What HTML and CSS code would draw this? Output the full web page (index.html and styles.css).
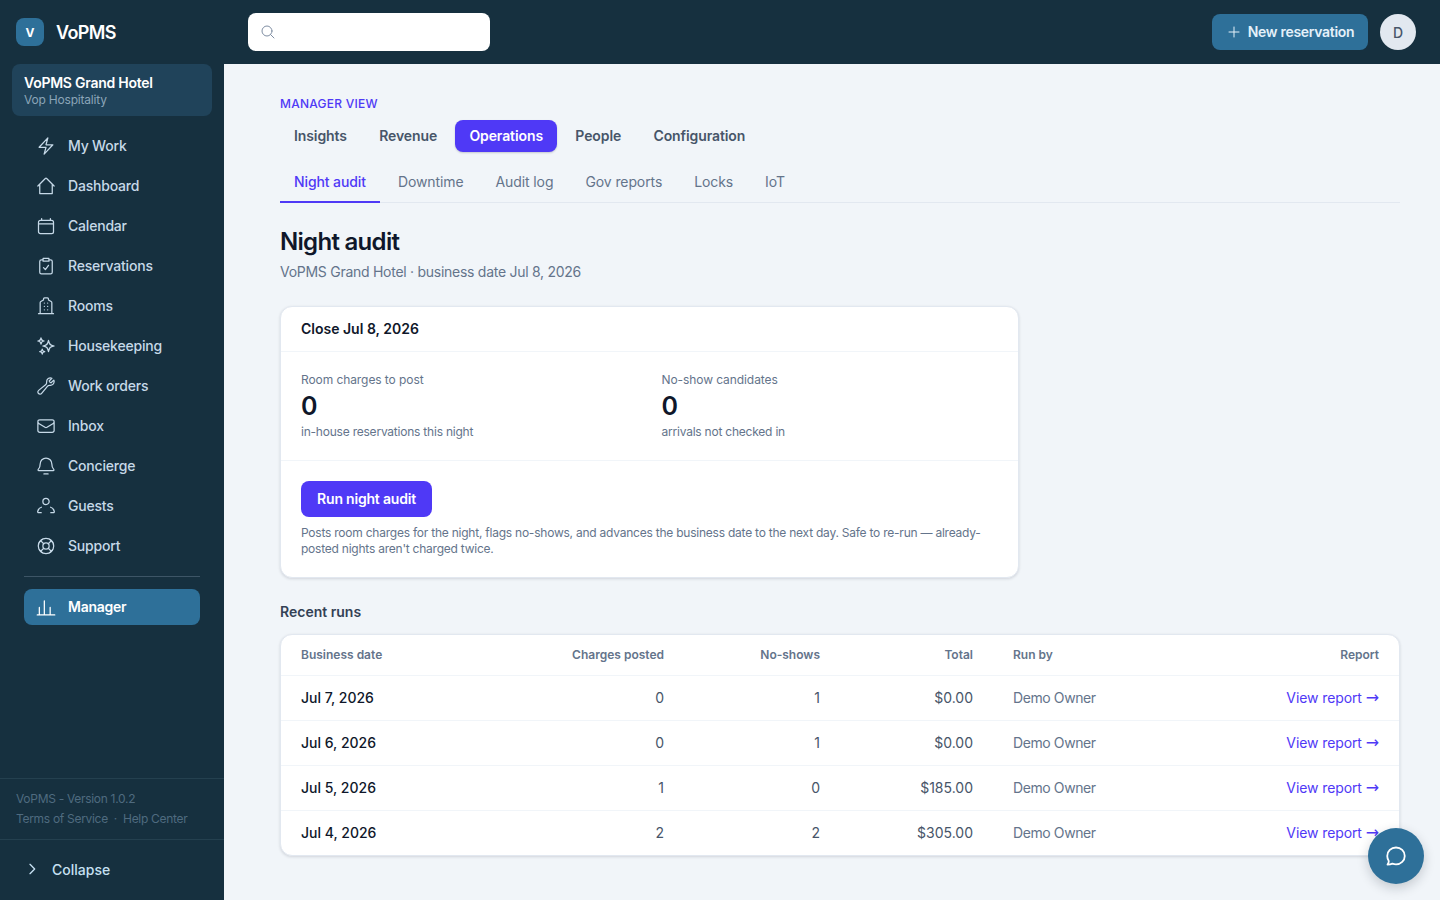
FILE: index.html
```html
<!DOCTYPE html>
<html lang="en">
  <head>
    <meta charset="UTF-8" />
    <meta name="viewport" content="width=device-width, initial-scale=1.0" />
    <title>VoPMS - Night audit</title>
    <link rel="stylesheet" href="styles.css">
  </head>
  <body>
    <div class="app">
      <aside class="sidebar">
        <div class="brand">
          <div class="brandLogo">V</div>
          <div class="brandName">VoPMS</div>
        </div>
        <div class="hotel">
          <div class="hotelName">VoPMS Grand Hotel</div>
          <div class="hotelOrg">Vop Hospitality</div>
        </div>
        <nav class="nav">
          <a class="navItem"><svg viewBox="0 0 24 24"><path d="M3.75 13.5l10.5-11.25L12 10.5h8.25L9.75 21.75 12 13.5H3.75z"/></svg>My Work</a>
          <a class="navItem"><svg viewBox="0 0 24 24"><path d="M2.25 12l8.95-8.95c.44-.44 1.16-.44 1.6 0L21.75 12M4.5 9.75V21h15V9.75"/></svg>Dashboard</a>
          <a class="navItem"><svg viewBox="0 0 24 24"><path d="M6.75 3v2.25M17.25 3v2.25M3 18.75V7.5a2.25 2.25 0 012.25-2.25h13.5A2.25 2.25 0 0121 7.5v11.25A2.25 2.25 0 0118.75 21H5.25A2.25 2.25 0 013 18.75zM3 9.5h18"/></svg>Calendar</a>
          <a class="navItem"><svg viewBox="0 0 24 24"><path d="M8.500 4.500H6.500a2 2 0 00-2 2V19.500a2 2 0 002 2h11a2 2 0 002-2V6.500a2 2 0 00-2-2h-2M8.500 2.750h7v3.500h-7zM9 14l2.250 2.250L15 11.250"/></svg>Reservations</a>
          <a class="navItem"><svg viewBox="0 0 24 24"><path d="M3 21.250h18M5 21.250V8c0-.6.300-1.100.800-1.400L9 4.750V3.500c0-.800.700-1.250 1.250-1.250h3.500c.6 0 1.250.450 1.250 1.250v1.250l3.200 1.850c.5.300.800.800.800 1.400v13.250M10 8.500h.01M14 8.500h.01M10 12.500h.01M14 12.500h.01M10 16.500h.01M14 16.500h.01"/></svg>Rooms</a>
          <a class="navItem"><svg viewBox="0 0 24 24"><path transform="matrix(-1 0 0 1 24 0)" d="M9.813 15.904L9 18.75l-.813-2.846a4.5 4.5 0 00-3.09-3.09L2.25 12l2.846-.813a4.5 4.5 0 003.09-3.09L9 5.25l.813 2.846a4.5 4.5 0 003.09 3.09L15.75 12l-2.846.813a4.5 4.5 0 00-3.09 3.09zM18.259 8.715L18 9.75l-.259-1.035a3.375 3.375 0 00-2.455-2.456L14.25 6l1.036-.259a3.375 3.375 0 002.455-2.456L18 2.25l.259 1.035a3.375 3.375 0 002.456 2.456L21.75 6l-1.035.259a3.375 3.375 0 00-2.456 2.456zM16.894 20.567L16.5 21.75l-.394-1.183a2.25 2.25 0 00-1.423-1.423L13.5 18.75l1.183-.394a2.25 2.25 0 001.423-1.423l.394-1.183.394 1.183a2.25 2.25 0 001.423 1.423l1.183.394-1.183.394a2.25 2.25 0 00-1.423 1.423z"/></svg>Housekeeping</a>
          <a class="navItem"><svg viewBox="0 0 24 24"><path d="M21.75 6.75a4.5 4.5 0 01-4.884 4.484c-1.076-.091-2.264.071-2.95.904l-7.152 8.684a2.548 2.548 0 11-3.586-3.586l8.684-7.152c.833-.686.995-1.874.904-2.95a4.5 4.5 0 016.336-4.486l-3.276 3.276a3.004 3.004 0 002.25 2.25l3.276-3.276c.256.565.398 1.192.398 1.852z"/></svg>Work orders</a>
          <a class="navItem"><svg viewBox="0 0 24 24"><path d="M21.75 6.75v10.5a2.25 2.25 0 01-2.25 2.25h-15a2.25 2.25 0 01-2.25-2.25V6.75m19.5 0A2.25 2.25 0 0019.5 4.5h-15a2.25 2.25 0 00-2.25 2.25m19.5 0v.243a2.25 2.25 0 01-1.07 1.916l-7.5 4.615a2.25 2.25 0 01-2.36 0L3.32 8.91a2.25 2.25 0 01-1.07-1.916V6.75"/></svg>Inbox</a>
          <a class="navItem"><svg viewBox="0 0 24 24"><path d="M5 9.500a7 7 0 0114 0c0 3 .7 5 2.300 6.600.5.5.2 1.400-.6 1.400H3.300c-.8 0-1.100-.9-.6-1.400C4.300 14.500 5 12.500 5 9.500zM9.500 21.500h5"/></svg>Concierge</a>
          <a class="navItem"><svg viewBox="0 0 24 24"><path d="M15.750 6.500a3.750 3.750 0 11-7.500 0 3.750 3.750 0 017.500 0zM6.500 13.500c-2.400.8-4.100 2.800-4.500 5.200-.1.700.4 1.300 1.100 1.300h3.150M17.500 13.500c2.400.8 4.100 2.800 4.500 5.200.1.700-.4 1.300-1.100 1.300h-3.150"/></svg>Guests</a>
          <a class="navItem"><svg viewBox="0 0 24 24"><circle cx="12" cy="12" r="9.250"/><circle cx="12" cy="12" r="3.750"/><path d="M5.500 5.500l3.800 3.800M18.500 5.500l-3.800 3.800M5.500 18.500l3.800-3.800M18.500 18.500l-3.800-3.800M7.500 4l-3.500 3.500M16.500 4l3.500 3.500M7.500 20l-3.500-3.500M16.500 20l3.500-3.500"/></svg>Support</a>
        </nav>
        <div class="navRule"></div>
        <a class="managerItem"><svg viewBox="0 0 24 24"><path d="M1.500 21.500h21M4 21.500v-9M10 21.500v-17M17 21.500v-9"/></svg>Manager</a>
        <div class="sideMeta">
          <div>VoPMS - Version 1.0.2</div>
          <div class="sideLinks"><span>Terms of Service</span><span>·</span><span>Help Center</span></div>
        </div>
        <div class="collapse"><svg viewBox="0 0 24 24"><path d="M9 5l7 7-7 7"/></svg>Collapse</div>
      </aside>

      <div class="mainWrap">
        <header class="topbar">
          <div class="search"><svg viewBox="0 0 24 24"><circle cx="10.500" cy="10.500" r="7.500"/><path d="M21 21l-5.200-5.200"/></svg></div>
          <div class="topRight">
            <button class="newBtn"><svg viewBox="0 0 24 24"><path d="M12 4.500v15M4.500 12h15"/></svg>New reservation</button>
            <div class="avatar">D</div>
          </div>
        </header>

        <main class="content">
          <div class="eyebrow">MANAGER VIEW</div>
          <div class="tabs">
            <a class="tab">Insights</a>
            <a class="tab">Revenue</a>
            <a class="tab tabOn">Operations</a>
            <a class="tab">People</a>
            <a class="tab">Configuration</a>
          </div>
          <div class="subtabs">
            <a class="subtab subtabOn">Night audit</a>
            <a class="subtab">Downtime</a>
            <a class="subtab">Audit log</a>
            <a class="subtab">Gov reports</a>
            <a class="subtab">Locks</a>
            <a class="subtab">IoT</a>
          </div>

          <h1 class="title">Night audit</h1>
          <p class="subtitle">VoPMS Grand Hotel · business date Jul 8, 2026</p>

          <section class="card closeCard">
            <div class="cardHead">Close Jul 8, 2026</div>
            <div class="stats">
              <div>
                <div class="statLabel">Room charges to post</div>
                <div class="statValue">0</div>
                <div class="statNote">in-house reservations this night</div>
              </div>
              <div>
                <div class="statLabel">No-show candidates</div>
                <div class="statValue">0</div>
                <div class="statNote">arrivals not checked in</div>
              </div>
            </div>
            <div class="cardFoot">
              <button class="runBtn">Run night audit</button>
              <p class="runNote">Posts room charges for the night, flags no-shows, and advances the business date to the next day. Safe to re-run — already-posted nights aren't charged twice.</p>
            </div>
          </section>

          <h2 class="sectionTitle">Recent runs</h2>
          <section class="card">
            <table class="runs">
              <thead>
                <tr>
                  <th class="colDate">Business date</th>
                  <th class="num colCharges">Charges posted</th>
                  <th class="num colShows">No-shows</th>
                  <th class="num colTotal">Total</th>
                  <th class="colBy">Run by</th>
                  <th class="num">Report</th>
                </tr>
              </thead>
              <tbody>
                <tr>
                  <td class="date">Jul 7, 2026</td><td class="num">0</td><td class="num">1</td><td class="num">$0.00</td><td class="by">Demo Owner</td><td class="num"><a class="report">View report <span class="arrow">→</span></a></td>
                </tr>
                <tr>
                  <td class="date">Jul 6, 2026</td><td class="num">0</td><td class="num">1</td><td class="num">$0.00</td><td class="by">Demo Owner</td><td class="num"><a class="report">View report <span class="arrow">→</span></a></td>
                </tr>
                <tr>
                  <td class="date">Jul 5, 2026</td><td class="num">1</td><td class="num">0</td><td class="num">$185.00</td><td class="by">Demo Owner</td><td class="num"><a class="report">View report <span class="arrow">→</span></a></td>
                </tr>
                <tr>
                  <td class="date">Jul 4, 2026</td><td class="num">2</td><td class="num">2</td><td class="num">$305.00</td><td class="by">Demo Owner</td><td class="num"><a class="report">View report <span class="arrow">→</span></a></td>
                </tr>
              </tbody>
            </table>
          </section>
        </main>
      </div>
    </div>

    <button class="chatBtn"><svg viewBox="0 0 24 24"><path d="M12 3.500c4.900 0 8.750 3.700 8.750 8.400s-3.850 8.400-8.750 8.400c-1.300 0-2.500-.3-3.600-.7-1.500.7-3.100 1-4.900 1 .8-1 1.300-2.200 1.300-3.500C3.900 15.600 3.250 13.900 3.250 11.900 3.250 7.200 7.100 3.500 12 3.500z"/></svg></button>
  </body>
</html>
```

FILE: styles.css
```css
* {
  margin: 0;
  padding: 0;
  box-sizing: border-box;
}
html,
body {
  height: 100%;
}
body {
  font-family: Inter, "Liberation Sans", sans-serif;
  font-size: 14px;
  color: #0f172a;
  background: #f1f5f9;
  overflow: hidden;
}
svg {
  fill: none;
  stroke: currentColor;
  stroke-width: 1.5;
  stroke-linecap: round;
  stroke-linejoin: round;
  flex-shrink: 0;
}
.app {
  display: flex;
  height: 900px;
}

/* sidebar */
.sidebar {
  width: 224px;
  height: 100%;
  background: #16303f;
  display: flex;
  flex-direction: column;
  flex-shrink: 0;
}
.brand {
  height: 64px;
  padding: 0 16px;
  display: flex;
  align-items: center;
  gap: 12px;
}
.brandLogo {
  width: 28px;
  height: 28px;
  border-radius: 8px;
  background: #2e7099;
  color: #ffffff;
  font-size: 12px;
  font-weight: 700;
  display: flex;
  align-items: center;
  justify-content: center;
}
.brandName {
  color: #ffffff;
  font-size: 18px;
  font-weight: 600;
  letter-spacing: -0.6px;
}
.hotel {
  margin: 0 12px;
  height: 52px;
  padding: 9px 12px;
  border-radius: 8px;
  background: #20435a;
}
.hotelName {
  color: #ffffff;
  font-size: 14px;
  font-weight: 600;
  line-height: 19px;
  letter-spacing: -0.25px;
}
.hotelOrg {
  color: #8ba5b8;
  font-size: 12px;
  line-height: 16px;
  letter-spacing: -0.2px;
}
.nav {
  margin-top: 10px;
  padding: 0 24px;
  display: flex;
  flex-direction: column;
}
.navItem {
  height: 40px;
  display: flex;
  align-items: center;
  gap: 12px;
  padding: 0 0 2px 12px;
  color: #c6d9e8;
  font-size: 14px;
  font-weight: 500;
  letter-spacing: -0.2px;
}
.navItem svg {
  width: 20px;
  height: 20px;
  margin-top: 2px;
}
.navRule {
  height: 1px;
  margin: 10px 24px 12px;
  background: #3d5566;
}
.managerItem {
  margin: 0 24px;
  height: 36px;
  border-radius: 8px;
  background: #2e7099;
  color: #ffffff;
  display: flex;
  align-items: center;
  gap: 12px;
  padding: 0 0 1px 12px;
  font-size: 14px;
  font-weight: 600;
  letter-spacing: -0.25px;
}
.managerItem svg {
  width: 20px;
  height: 20px;
  margin-top: 1px;
}
.sideMeta {
  margin-top: auto;
  height: 61px;
  padding: 10px 16px 0;
  border-top: 1px solid #24404f;
  color: #4f6b7f;
  font-size: 12px;
  line-height: 20px;
  letter-spacing: -0.3px;
}
.sideLinks {
  display: flex;
  gap: 6px;
}
.collapse {
  height: 61px;
  border-top: 1px solid #24404f;
  padding: 0 0 2px 24px;
  display: flex;
  align-items: center;
  gap: 12px;
  color: #c6e0f2;
  font-size: 14px;
  font-weight: 500;
}
.collapse svg {
  width: 16px;
  height: 16px;
  stroke-width: 2;
}

/* top bar */
.mainWrap {
  flex: 1;
  min-width: 0;
  display: flex;
  flex-direction: column;
}
.topbar {
  height: 64px;
  background: #16303f;
  padding: 0 24px;
  display: flex;
  align-items: center;
  justify-content: space-between;
  flex-shrink: 0;
}
.search {
  width: 242px;
  height: 38px;
  background: #ffffff;
  border-radius: 8px;
  padding-left: 12px;
  display: flex;
  align-items: center;
  color: #7f8ea3;
}
.search svg {
  width: 16px;
  height: 16px;
}
.topRight {
  display: flex;
  align-items: center;
  gap: 12px;
}
.newBtn {
  width: 156px;
  height: 36px;
  border: none;
  border-radius: 8px;
  padding-bottom: 2px;
  background: #2e7099;
  color: #e4f1fa;
  font-family: inherit;
  font-size: 14px;
  font-weight: 600;
  letter-spacing: -0.3px;
  display: flex;
  align-items: center;
  justify-content: center;
  gap: 6px;
}
.newBtn svg {
  width: 16px;
  height: 16px;
  margin-top: 2px;
}
.avatar {
  width: 36px;
  height: 36px;
  border-radius: 50%;
  background: #e2e8f0;
  color: #475569;
  font-size: 14px;
  font-weight: 500;
  display: flex;
  align-items: center;
  justify-content: center;
}

/* main content */
.content {
  flex: 1;
  padding: 32px 40px 0 56px;
}
.eyebrow {
  color: #4f39f6;
  font-size: 12px;
  font-weight: 500;
  line-height: 16px;
  letter-spacing: 0.25px;
}
.tabs {
  margin-top: 8px;
  display: flex;
  gap: 4.3px;
}
.tab {
  height: 32px;
  padding: 0 14px;
  border-radius: 8px;
  color: #475569;
  font-size: 14px;
  font-weight: 600;
  line-height: 32px;
  letter-spacing: -0.1px;
}
.tabOn {
  background: #4f39f6;
  color: #ffffff;
  box-shadow: 0 1px 2px rgba(15, 23, 42, 0.2);
}
.subtabs {
  margin-top: 8px;
  display: flex;
  gap: 4px;
  border-bottom: 1px solid #e2e8f0;
}
.subtab {
  height: 43px;
  padding: 0 14px;
  color: #64748b;
  font-size: 14px;
  line-height: 44px;
  letter-spacing: -0.1px;
  margin-bottom: -1px;
}
.subtabOn {
  color: #4f39f6;
  font-weight: 500;
  border-bottom: 2px solid #4f39f6;
}
.title {
  margin-top: 23px;
  font-size: 24px;
  font-weight: 600;
  line-height: 32px;
  letter-spacing: -0.7px;
}
.subtitle {
  margin-top: 4px;
  color: #64748b;
  font-size: 14px;
  line-height: 20px;
  letter-spacing: -0.27px;
}
.card {
  background: #ffffff;
  border: 1px solid #e2e8f0;
  border-radius: 12px;
  box-shadow: 0 1px 3px rgba(15, 23, 42, 0.14);
  overflow: hidden;
}
.closeCard {
  width: 739px;
  margin-top: 24px;
}
.cardHead {
  height: 45px;
  padding: 0 20px;
  border-bottom: 1px solid #f1f5f9;
  font-size: 14px;
  font-weight: 600;
  line-height: 44px;
}
.stats {
  height: 109px;
  padding: 20px;
  border-bottom: 1px solid #f1f5f9;
  display: grid;
  grid-template-columns: 1fr 1fr;
  column-gap: 24px;
}
.statLabel,
.statNote {
  color: #64748b;
  font-size: 12px;
  line-height: 16px;
}
.statLabel {
  letter-spacing: -0.08px;
}
.statValue {
  margin-top: 2px;
  font-size: 25px;
  font-weight: 600;
  line-height: 32px;
}
.statNote {
  margin-top: 2px;
  letter-spacing: -0.22px;
}
.cardFoot {
  padding: 20px;
}
.runBtn {
  display: block;
  width: 131px;
  height: 36px;
  border: none;
  border-radius: 8px;
  padding-bottom: 2px;
  background: #4f39f6;
  color: #ffffff;
  font-family: inherit;
  font-size: 14px;
  font-weight: 600;
  letter-spacing: -0.2px;
}
.runNote {
  margin-top: 8px;
  color: #64748b;
  font-size: 12px;
  line-height: 16px;
  letter-spacing: -0.23px;
}
.sectionTitle {
  margin-top: 24px;
  font-size: 14px;
  font-weight: 600;
  line-height: 20px;
  color: #334155;
}
.sectionTitle + .card {
  margin-top: 12px;
}
.runs {
  width: 100%;
  border-collapse: collapse;
  table-layout: fixed;
}
.runs th {
  height: 40px;
  padding: 0 20px;
  color: #64748b;
  font-size: 12px;
  font-weight: 600;
  text-align: left;
}
.runs td {
  height: 45px;
  padding: 0 20px;
  border-top: 1px solid #f1f5f9;
  color: #475569;
  font-size: 14px;
}
.runs .num {
  text-align: right;
}
.colDate {
  width: 239px;
}
.colCharges {
  width: 164px;
}
.colShows {
  width: 156px;
}
.colTotal {
  width: 153px;
}
.colBy {
  width: 180px;
}
.runs .date {
  color: #0f172a;
  font-weight: 500;
}
.runs .by {
  color: #64748b;
  letter-spacing: -0.4px;
}
.report {
  color: #4f39f6;
  letter-spacing: -0.1px;
}
.arrow {
  font-family: "DejaVu Sans", sans-serif;
  font-size: 16px;
  line-height: 1;
}
.chatBtn {
  position: fixed;
  right: 16px;
  bottom: 16px;
  width: 56px;
  height: 56px;
  border: none;
  border-radius: 50%;
  background: #2e7099;
  color: #ffffff;
  box-shadow: 0 4px 12px rgba(15, 23, 42, 0.2);
  display: flex;
  align-items: center;
  justify-content: center;
}
.chatBtn svg {
  width: 24px;
  height: 24px;
  stroke-width: 1.8;
}
```
